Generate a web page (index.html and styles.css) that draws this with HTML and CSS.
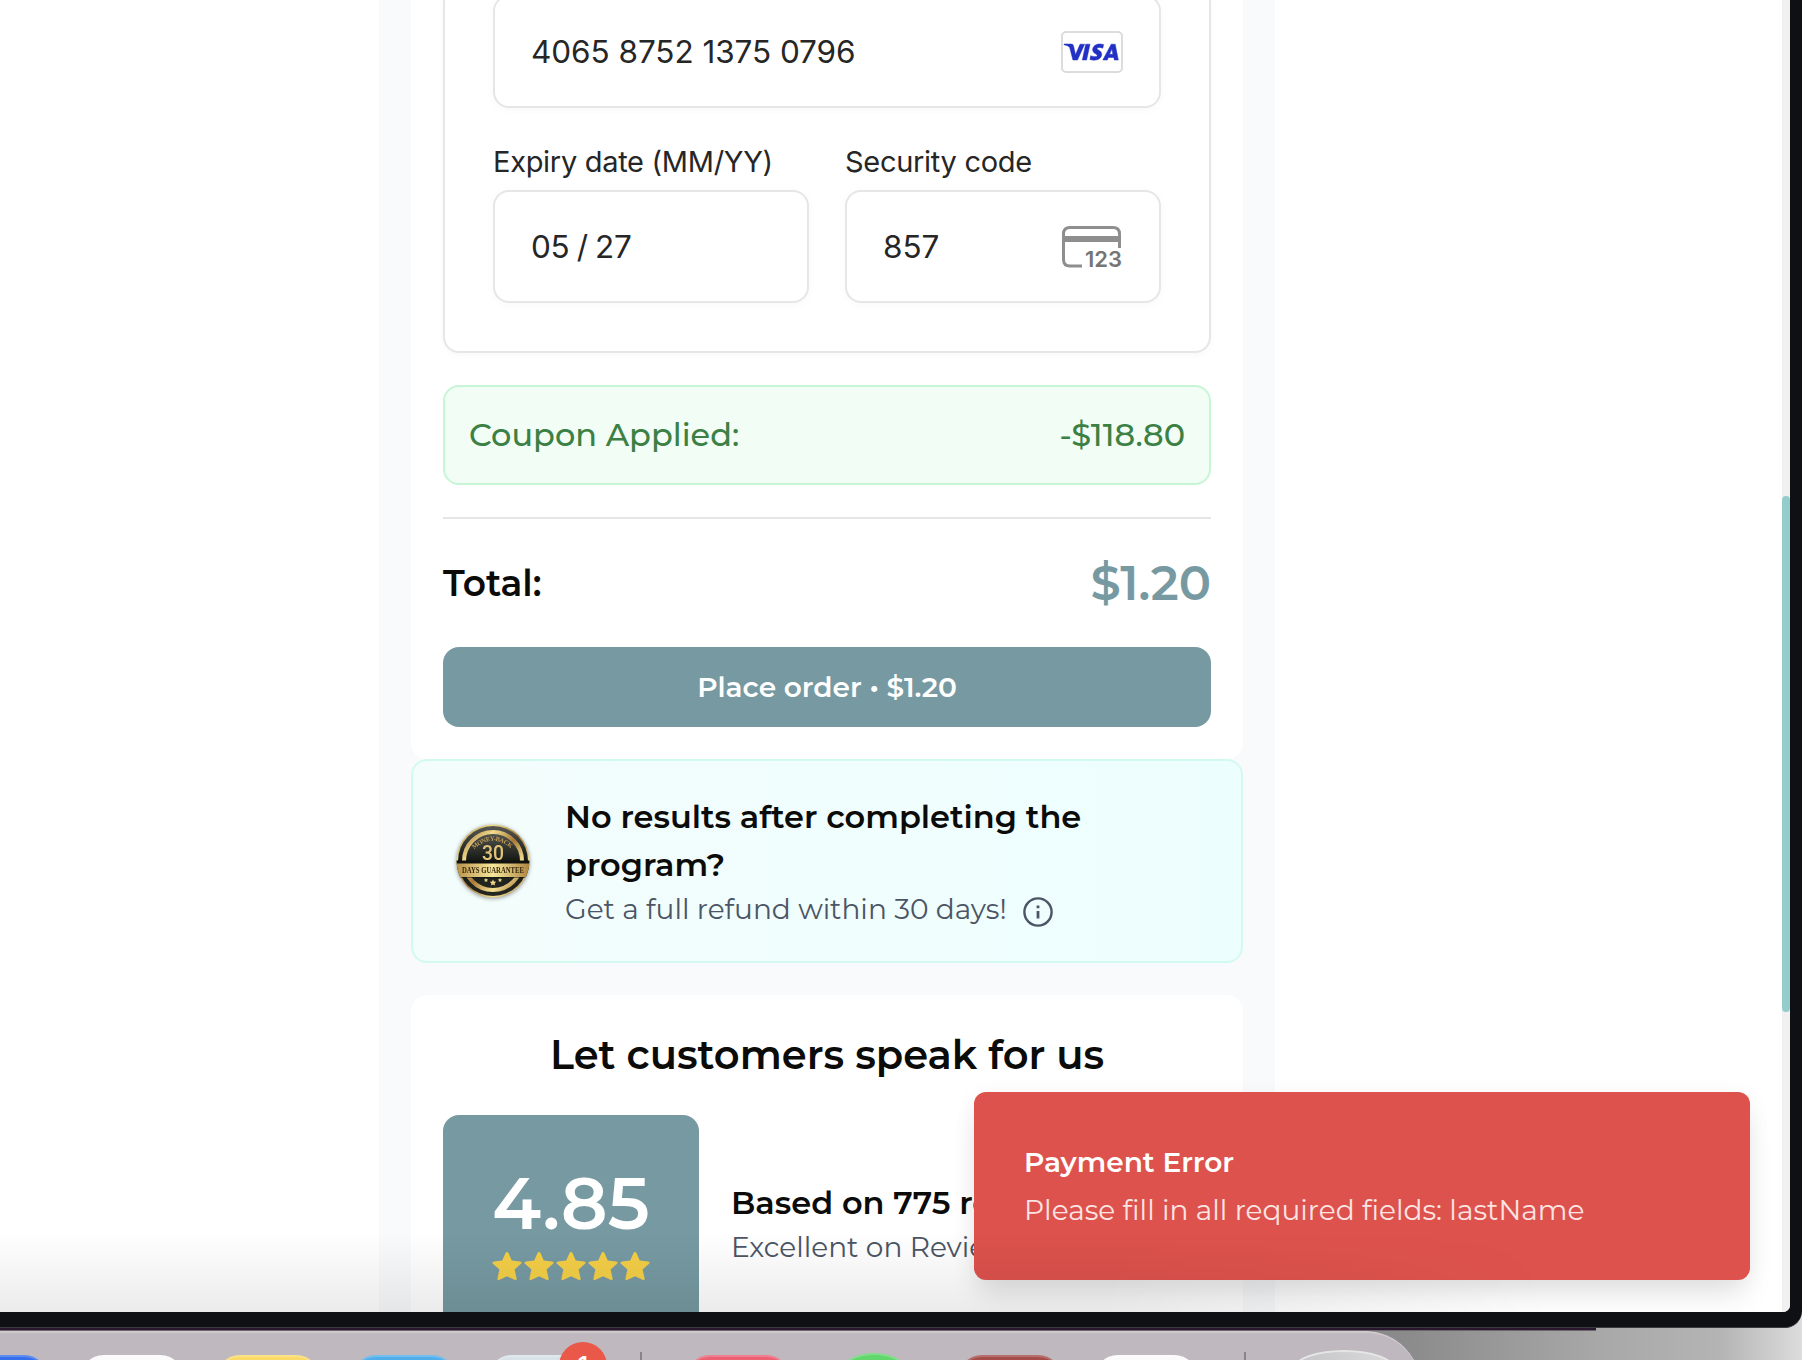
FILE: index.html
```
<!DOCTYPE html>
<html lang="en">
<head>
<meta charset="utf-8">
<title>Checkout</title>
<link rel="stylesheet" href="styles.css">
</head>
<body>
<div class="window">
  <main class="viewport">
    <div class="column">
      <section class="card checkout">
        <div class="payment">
          <div class="input number"><span>4065 8752 1375 0796</span>
            <svg class="visa" viewBox="0 0 62 42" width="62" height="42"><rect x="1" y="1" width="60" height="40" rx="4" fill="#fff" stroke="#dcdcdc" stroke-width="2"/><path fill="#2230c4" stroke="#2230c4" stroke-width=".5" d="M3 13h7.300q1.800 0 2.200 1.700l2 9L19 13.200h4.600L16.500 29h-4.600L8.600 16.200Q7 14.500 3 13.700zM24.700 13.200h4.300L25.600 29h-4.300zM42.600 13.600l-.8 3.600c-2.500-1-5.400-1.200-5.700.3-.3 1.700 5.100 2 4.600 6.200-.6 5-6.500 6.500-11.800 4.700l.8-3.700c3.200 1.400 6.300 1.300 6.500-.2.300-1.800-5-2-4.500-6.300.6-4.600 6-6.200 10.900-4.600zM50.200 13.200h4L57.300 29h-4l-.5-2.500h-5.500L46.300 29h-4.500zM50.900 18l-2.400 5.300h3.400z"/></svg>
          </div>
          <div class="fields">
            <label class="field"><span class="label">Expiry date (MM/YY)</span>
              <span class="input expiry"><span>05 / 27</span></span></label>
            <label class="field"><span class="label">Security code</span>
              <span class="input"><span>857</span>
                <svg class="cvc" viewBox="0 0 62 44" width="62" height="44"><path d="M21 41H9q-6.500 0-6.500-6.500V9Q2.500 2.500 9 2.500h43q6.500 0 6.500 6.500v14" fill="none" stroke="#8e8e8e" stroke-width="3"/><path d="M2 11h57v6H2z" fill="#8e8e8e"/><text x="24" y="42" textLength="37" class="cvc-text">123</text></svg>
              </span></label>
          </div>
        </div>
        <div class="coupon"><span>Coupon Applied:</span><span>-$118.80</span></div>
        <div class="total"><span class="total-label">Total:</span><span class="total-value">$1.20</span></div>
        <button class="order">Place order • $1.20</button>
      </section>
      <section class="guarantee">
        <svg class="seal" viewBox="0 0 80 80" width="80" height="80">
          <defs><linearGradient id="gold" x1="0" y1="0" x2="1" y2="1"><stop offset="0" stop-color="#a9793c"/><stop offset=".25" stop-color="#f0dc8c"/><stop offset=".5" stop-color="#a87837"/><stop offset=".75" stop-color="#f2df91"/><stop offset="1" stop-color="#96662c"/></linearGradient>
          <linearGradient id="band"><stop offset="0" stop-color="#b58b43"/><stop offset=".5" stop-color="#f6e79a"/><stop offset="1" stop-color="#a87c38"/></linearGradient>
          <linearGradient id="dark" x1="0" y1="0" x2="0" y2="1"><stop offset="0" stop-color="#555752"/><stop offset=".5" stop-color="#151714"/><stop offset="1" stop-color="#252723"/></linearGradient>
          <clipPath id="disc"><circle cx="40" cy="40" r="36.500"/></clipPath>
          <path id="arc" d="M21 28.500Q40 11 59 28.500"/></defs>
          <circle cx="40" cy="40" r="36.500" fill="url(#gold)"/><circle cx="40" cy="40" r="35" fill="url(#dark)"/><circle cx="40" cy="40" r="29" fill="url(#dark)" stroke="url(#gold)" stroke-width="4"/>
          <text class="seal-arc"><textPath href="#arc" textLength="41">MONEY-BACK</textPath></text>
          <text x="29" y="39" textLength="22" lengthAdjust="spacingAndGlyphs" class="seal-days">30</text>
          <g clip-path="url(#disc)"><path d="M0 39.500h80v17H0z" fill="#11120f"/><path d="M0 42.500h80V56H0z" fill="url(#band)"/></g>
          <text x="9" y="52" textLength="62" lengthAdjust="spacingAndGlyphs" class="seal-band">DAYS GUARANTEE</text>
          <path fill="#ecd485" d="M40 58.500l1 2 2.200.3-1.600 1.600.4 2.200-2-1-2 1 .4-2.200-1.600-1.600 2.200-.3zM33 57l.7 1.300 1.400.1-1 1 .2 1.500-1.300-.7-1.300.7.2-1.500-1-1 1.400-.1zM47 57l.7 1.300 1.400.1-1 1 .2 1.500-1.300-.7-1.300.7.2-1.500-1-1 1.400-.1z"/>
        </svg>
        <div class="guarantee-copy">
          <div class="guarantee-title">No results after completing the<br>program?</div>
          <div class="guarantee-note"><span>Get a full refund within 30 days!</span>
            <svg class="info" viewBox="0 0 32 32" width="32" height="32" fill="none" stroke="#4b5565"><circle cx="16" cy="16" r="13.600" stroke-width="2.400"/><path d="M16 15v7.500M16 9.500v2.800" stroke-width="2.800"/></svg>
          </div>
        </div>
      </section>
      <section class="card reviews">
        <h2 class="reviews-title">Let customers speak for us</h2>
        <div class="reviews-row">
          <div class="score"><span class="score-value">4.85</span>
            <svg class="stars" viewBox="0 0 160 32" width="160" height="32"><defs><path id="star" d="M16 2q1 0 1.600 1.200l3.200 7.300 8.200.9q2.700.5.800 2.500l-6.200 5.500 2 9q.2 2.400-1.700 1.700L16 26.300 8.100 30.100q-1.900.7-1.700-1.700l2-9L2.200 13.900q-1.900-2 .8-2.500l8.200-.9 3.200-7.300Q15 2 16 2z"/></defs><g fill="#f4cf48"><use href="#star"/><use href="#star" x="32"/><use href="#star" x="64"/><use href="#star" x="96"/><use href="#star" x="128"/></g></svg>
          </div>
          <div class="reviews-copy"><span class="reviews-count">Based on 775 re</span><span class="reviews-source">Excellent on Revie</span></div>
        </div>
      </section>
    </div>
    <aside class="toast"><strong class="toast-title">Payment Error</strong><span class="toast-text">Please fill in all required fields: lastName</span></aside>
    <div class="edge-shade"></div>
    <div class="scrollbar"><div class="thumb"></div></div>
  </main>
</div>
<div class="desktop">
  <nav class="dock">
    <span class="app blue"></span>
    <span class="app white"></span>
    <span class="app yellow"></span>
    <span class="app sky"></span>
    <span class="app pale"><span class="badge">1</span></span>
    <span class="divider first"></span>
    <span class="app pink"></span>
    <span class="app green"></span>
    <span class="app crimson"></span>
    <span class="app white"></span>
    <span class="divider last"></span>
    <span class="trash"></span>
  </nav>
</div>
</body>
</html>
```
FILE: styles.css
```
* { box-sizing: border-box; }
body { margin: 0; width: 1802px; height: 1360px; overflow: hidden; background: linear-gradient(90deg, #8a8a8a 1400px, #a8a8a8 1600px, #b4b4b4 1720px, #dcdcdc 1802px); font-family: Montserrat, Inter, sans-serif; color: #0b0b0a; }
svg { flex: none; }
.window { position: relative; width: 1802px; height: 1328px; padding: 0 12px 16px 0; background: #0e1014; border-bottom: 1px solid #3b3a40; border-radius: 0 0 17px 0; }
.viewport { position: relative; height: 1312px; overflow: hidden; background: #fff; border-radius: 0 0 7px 0; }
.column { width: 896px; height: 1312px; margin-left: 379px; padding: 0 32px; background: #f9fafc; overflow: hidden; }
.card { background: #fff; padding: 32px; border-radius: 16px; }
.checkout { height: 759px; padding-top: 0; border-radius: 0 0 16px 16px; }
.payment { display: flow-root; height: 353px; padding: 0 48px; border: 2px solid #e6e6e6; border-top: 0; border-radius: 0 0 16px 16px; box-shadow: 0 2px 6px rgba(0,0,0,.03); font-family: Inter, sans-serif; color: #262626; }
.input { display: flex; align-items: center; justify-content: space-between; height: 113px; padding: 0 36px; background: #fff; border: 2px solid #e6e6e6; border-radius: 16px; box-shadow: 0 2px 8px rgba(0,0,0,.03); font-size: 31.500px; letter-spacing: -.06px; }
.number { margin-top: -5px; }
.expiry { letter-spacing: -.3px; word-spacing: -1.300px; }
.fields { display: flex; gap: 36px; padding-top: 36px; }
.field { flex: 1; }
.label { display: block; height: 46px; line-height: 36px; font-size: 29px; letter-spacing: -.3px; }
.cvc { overflow: visible; }
.cvc-text { font: 600 22px Inter, sans-serif; letter-spacing: 0; fill: #757575; }
.coupon { display: flex; align-items: center; justify-content: space-between; height: 100px; margin-top: 32px; padding: 0 24px 2px; border: 2px solid #c6f6d5; border-radius: 16px; background: #f2fdf6; color: #3c8044; font-size: 32px; font-weight: 500; }
.total { display: flex; align-items: center; justify-content: space-between; height: 130px; margin-top: 32px; border-top: 2px solid #e5e5e5; font-weight: 600; }
.total-label { font-size: 36px; }
.total-value { font-size: 48px; color: #779aa2; }
.order { display: block; width: 100%; height: 80px; padding: 0; border: 0; border-radius: 16px; background: #779aa2; color: #fff; font: 600 28px Montserrat, Inter, sans-serif; }
.guarantee { display: flex; align-items: center; height: 204px; padding: 0 40px; border: 2px solid #d2faef; border-radius: 16px; background: linear-gradient(90deg, #f3fdfc, #edfefe); }
.guarantee-copy { margin-left: 32px; }
.guarantee-title { font-size: 32px; line-height: 48px; font-weight: 600; }
.guarantee-note { display: flex; align-items: center; gap: 15px; height: 40px; font-size: 28px; color: #4b5565; }
.info { margin-top: 6px; }
.seal { filter: drop-shadow(0 1px 2px rgba(0,0,0,.4)); overflow: visible; }
.seal-arc { font: 700 6.500px "Liberation Serif", serif; fill: #c39c54; }
.seal-days { font: 500 21px Roboto, sans-serif; fill: #e0c377; }
.seal-band { font: 700 8px "Liberation Serif", serif; fill: #37270f; }
.reviews { margin-top: 32px; height: 500px; }
.reviews-title { margin: 0; height: 88px; line-height: 56px; text-align: center; font-size: 40px; font-weight: 600; }
.reviews-row { display: flex; gap: 32px; height: 216px; }
.score { display: flex; flex: none; flex-direction: column; align-items: center; width: 256px; height: 216px; padding-top: 48px; background: #779aa2; border-radius: 16px 16px 0 0; color: #fff; }
.score-value { font-size: 72px; line-height: 80px; margin-bottom: 7px; font-weight: 600; }
.reviews-copy { display: flex; flex-direction: column; justify-content: center; white-space: nowrap; }
.reviews-count { font-size: 32px; line-height: 48px; font-weight: 600; }
.reviews-source { font-size: 28px; line-height: 40px; color: #4b5565; }
.edge-shade { position: absolute; left: 0; right: 0; bottom: 0; height: 80px; background: linear-gradient(rgba(0,0,0,0), rgba(0,0,0,.08)); -webkit-mask-image: linear-gradient(90deg, #000 1100px, transparent 1550px); mask-image: linear-gradient(90deg, #000 1100px, transparent 1550px); }
.toast { position: absolute; left: 974px; top: 1092px; width: 776px; height: 188px; padding: 46px 50px; display: flex; flex-direction: column; border-radius: 12px; background: #dd524c; color: #fff; box-shadow: 0 20px 30px -6px rgba(0,0,0,.1), 0 4px 24px rgba(0,0,0,.05); white-space: nowrap; }
.toast-title { font-size: 28px; line-height: 48px; font-weight: 600; }
.toast-text { font-size: 28px; line-height: 48px; color: #fbe4e3; }
.scrollbar { position: absolute; right: 0; top: 0; width: 8px; height: 100%; padding-top: 496px; background: #f0f0f0; }
.thumb { height: 516px; border-radius: 4px; background: #93cccb; }
.desktop { height: 32px; padding-top: 3px; overflow: hidden; background: linear-gradient(#2b1630 0, #2b1630 2px, #6a676a 2px, #6a676a 3px, transparent 3px) 0 0 / 1596px 100% no-repeat; }
.dock { display: flex; gap: 32px; width: 1421px; height: 90px; padding-top: 22px; border-top: 2px solid #cfc9cf; border-radius: 0 56px 0 0; background: #bfb9bf; }
.app { position: relative; flex: none; width: 104px; height: 104px; border-radius: 24px; box-shadow: inset 0 2px 0 rgba(255,255,255,.2); }
.app.blue { margin-left: -56px; background: #366fec; }
.white { background: #fafafa; }
.yellow { background: #fadb69; }
.sky { background: #50aeeb; }
.pale { background: #d8e3e9; }
.pink { background: #ec6074; }
.green { background: #62d76c; border-radius: 50%; margin-top: -2px; }
.crimson { background: #a64c4a; }
.badge { position: absolute; right: -15px; top: -13px; width: 48px; height: 48px; padding-top: 7px; border-radius: 50%; background: #e95849; color: #fff; text-align: center; font: 500 26px/34px Inter, sans-serif; }
.divider { flex: none; width: 2px; height: 40px; margin-top: -3px; background: #898489; }
.first { margin-left: 16px; margin-right: 12px; }
.last { margin-left: 14px; margin-right: 14px; }
.trash { flex: none; width: 104px; height: 40px; margin-top: -5px; border-radius: 50%; border: 2px solid #e6e6e7; background: linear-gradient(90deg, #c4c4c6, #dadadb); }
```
